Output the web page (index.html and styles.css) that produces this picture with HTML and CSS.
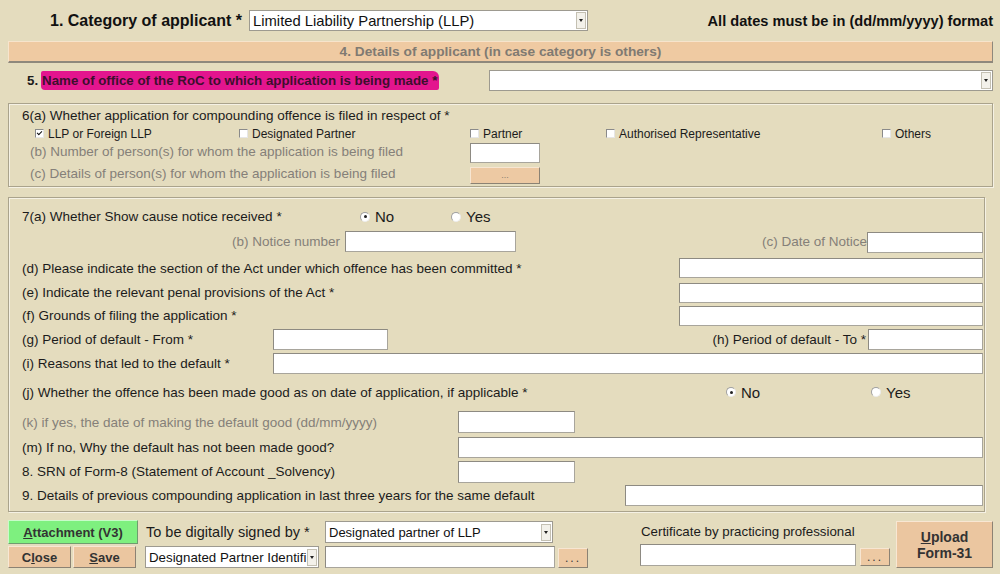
FILE: index.html
```html
<!DOCTYPE html>
<html lang="en">
<head>
  <meta charset="UTF-8" />
  <title>Form LLP-31 | Compounding Application</title>
  <link rel="stylesheet" href="styles.css">
</head>
<body>

<div class="head">
  <span class="head-label">1. Category of applicant *</span>
  <div class="select sel-category"><span class="txt">Limited Liability Partnership (LLP)</span><span class="arrow"></span></div>
  <span class="date-note">All dates must be in (dd/mm/yyyy) format</span>
</div>

<div class="band">4. Details of applicant (in case category is others)</div>

<div class="roc-row">
  <span class="roc-num">5.</span>
  <span class="roc-label">Name of office of the RoC to which application is being made *</span>
  <div class="select sel-roc"><span class="txt"></span><span class="arrow"></span></div>
</div>

<section class="panel panel-6">
  <div class="p-title">6(a) Whether application for compounding offence is filed in respect of *</div>
  <div class="checks">
    <label class="chk c1"><span class="cb on"></span>LLP or Foreign LLP</label>
    <label class="chk c2"><span class="cb"></span>Designated Partner</label>
    <label class="chk c3"><span class="cb"></span>Partner</label>
    <label class="chk c4"><span class="cb"></span>Authorised Representative</label>
    <label class="chk"><span class="cb"></span>Others</label>
  </div>
  <div class="p-row h21">
    <span class="muted lbl-6">(b) Number of person(s) for whom the application is being filed</span>
    <input class="box w70" type="text">
  </div>
  <div class="p-row h20">
    <span class="muted lbl-6">(c) Details of person(s) for whom the application is being filed</span>
    <button class="dots-btn">...</button>
  </div>
</section>

<section class="panel panel-7">
  <div class="row h21">
    <span class="lbl w338">7(a) Whether Show cause notice received *</span>
    <label class="opt w91"><span class="radio on"></span>No</label>
    <label class="opt"><span class="radio"></span>Yes</label>
  </div>
  <div class="row h28">
    <span class="muted lbl-b">(b) Notice number</span>
    <input class="box w171" type="text">
    <span class="muted push">(c) Date of Notice</span>
    <input class="box w116 low" type="text">
  </div>
  <div class="row h26">
    <span class="lbl">(d) Please indicate the section of the Act under which offence has been committed *</span>
    <input class="box w304 push" type="text">
  </div>
  <div class="row h23">
    <span class="lbl">(e) Indicate the relevant penal provisions of the Act *</span>
    <input class="box w304 push" type="text">
  </div>
  <div class="row h23">
    <span class="lbl">(f) Grounds of filing the application *</span>
    <input class="box w304 push" type="text">
  </div>
  <div class="row h25">
    <span class="lbl w251">(g) Period of default - From *</span>
    <input class="box w115" type="text">
    <span class="push">(h) Period of default - To *</span>
    <input class="box w115 gap2" type="text">
  </div>
  <div class="row h23">
    <span class="lbl w251">(i) Reasons that led to the default *</span>
    <input class="box grow" type="text">
  </div>
  <div class="row h34">
    <span class="lbl w704">(j) Whether the offence has been made good as on date of application, if applicable *</span>
    <label class="opt w145"><span class="radio on"></span>No</label>
    <label class="opt"><span class="radio"></span>Yes</label>
  </div>
  <div class="row h26">
    <span class="lbl muted w436">(k) if yes, the date of making the default good (dd/mm/yyyy)</span>
    <input class="box w117" type="text">
  </div>
  <div class="row h25">
    <span class="lbl w436">(m) If no, Why the default has not been made good?</span>
    <input class="box grow" type="text">
  </div>
  <div class="row h23">
    <span class="lbl w436">8. SRN of Form-8 (Statement of Account _Solvency)</span>
    <input class="box w117" type="text">
  </div>
  <div class="row h25">
    <span class="lbl w603">9. Details of previous compounding application in last three years for the same default</span>
    <input class="box grow" type="text">
  </div>
</section>

<div class="footer">
  <div class="col-btns">
    <button class="btn btn-green"><u>A</u>ttachment (V3)</button>
    <div class="btn-pair">
      <button class="btn">C<u>l</u>ose</button>
      <button class="btn"><u>S</u>ave</button>
    </div>
  </div>

  <div class="col-sign">
    <div class="sign-top">
      <span class="sign-label">To be digitally signed by *</span>
      <div class="select sel-signer"><span class="txt">Designated partner of LLP</span><span class="arrow"></span></div>
    </div>
    <div class="sign-bottom">
      <div class="select sel-id"><span class="txt">Designated Partner Identifi</span><span class="arrow"></span></div>
      <input class="box w230" type="text">
      <button class="dots-btn small">...</button>
    </div>
  </div>

  <div class="col-cert">
    <span class="cert-label">Certificate by practicing professional</span>
    <div class="cert-bottom">
      <input class="box w216" type="text">
      <button class="dots-btn small cert">...</button>
    </div>
  </div>

  <button class="btn btn-upload"><u>U</u>pload<br>Form-31</button>
</div>

</body>
</html>
```

FILE: styles.css
```css
* {
  margin: 0;
  padding: 0;
  box-sizing: border-box;
}

body {
  width: 1000px;
  height: 574px;
  overflow: hidden;
  background: #e4dcbe;
  font-family: "Liberation Sans", Arial, sans-serif;
  font-size: 13.5px;
  color: #1b1b1b;
}

/* shared form controls */
.box {
  display: block;
  height: 21px;
  background: #fff;
  border: 1px solid #a8a59c;
  border-top-color: #8d8a82;
  border-left-color: #8d8a82;
  font: inherit;
  outline: none;
}

.select {
  display: flex;
  align-items: center;
  height: 21px;
  background: #fff;
  border: 1px solid #9d9a90;
  padding-left: 3px;
  font-size: 13px;
  color: #111;
}

.select .txt {
  flex: 1;
  white-space: nowrap;
  overflow: hidden;
}

.arrow {
  display: flex;
  align-items: center;
  justify-content: center;
  width: 10px;
  height: 17px;
  margin-right: 1px;
  background: #f3f1ea;
  border: 1px solid #c4c0b2;
}

.arrow::after {
  content: "";
  border-left: 2px solid transparent;
  border-right: 2px solid transparent;
  border-top: 3px solid #222;
}

.muted {
  color: #858079;
}

.push {
  margin-left: auto;
}

.grow {
  flex: 1;
}

/* header */
.head {
  display: flex;
  align-items: center;
  height: 41px;
  padding: 0 7px 0 50px;
}

.head-label {
  width: 199px;
  font-size: 16px;
  font-weight: bold;
  white-space: nowrap;
  color: #111;
}

.sel-category {
  width: 339px;
  font-size: 14.8px;
}

.date-note {
  margin-left: auto;
  font-weight: bold;
  font-size: 14.6px;
  color: #111;
}

.band {
  height: 22px;
  margin: 0 7px 0 8px;
  background: #efcaa2;
  border: 1px solid;
  border-color: #f7e4cc #8e887c #8e887c #f7e4cc;
  border-bottom-width: 2px;
  text-align: center;
  font-weight: bold;
  font-size: 13.7px;
  color: #807a72;
  line-height: 19px;
}

.roc-row {
  display: flex;
  align-items: center;
  height: 34px;
  padding: 0 7px 0 27px;
  font-weight: bold;
  font-size: 13.3px;
}

.roc-label {
  margin-left: 3px;
  padding: 2px 2px 2px 1px;
  background: #e3158e;
  color: #3d0f2d;
  border-radius: 2px 6px 2px 4px;
}

.sel-roc {
  margin-left: auto;
  width: 504px;
}

/* grouped panels */
.panel {
  border: 1px solid #aaa38c;
  box-shadow: inset 1px 1px 0 #f5f1e4, 1px 1px 0 #f5f1e4;
}

.panel-6 {
  height: 84px;
  margin: 6px 7px 0 8px;
  padding: 3px 0 0 13px;
}

.p-title {
  height: 18px;
  line-height: 18px;
}

.checks {
  display: flex;
  align-items: center;
  height: 17px;
  margin-left: 13px;
  font-size: 12px;
}

.chk {
  display: flex;
  align-items: center;
  gap: 4px;
}

.c1 { width: 204px; }
.c2 { width: 231px; }
.c3 { width: 136px; }
.c4 { width: 276px; }

.cb {
  display: flex;
  align-items: center;
  justify-content: center;
  width: 9px;
  height: 9px;
  background: #fff;
  border: 1px solid;
  border-color: #8a8a8a #e6e6e6 #e6e6e6 #8a8a8a;
}

.cb.on::after {
  content: "";
  width: 4px;
  height: 2px;
  margin-top: -2px;
  border-left: 1.5px solid #111;
  border-bottom: 1.5px solid #111;
  transform: rotate(-45deg);
}

.p-row {
  display: flex;
  align-items: center;
}

.p-row .lbl-6 {
  margin-top: -3px;
}

.h20 { height: 20px; margin-top: 2px; }
.h21 { height: 21px; }
.h23 { height: 23px; }
.h25 { height: 25px; }
.h26 { height: 26px; }
.h28 { height: 28px; }
.h34 { height: 34px; }

.lbl-6 {
  width: 448px;
  padding-left: 8px;
}

.dots-btn {
  width: 70px;
  height: 17px;
  background: #edc9a3;
  border: 1px solid;
  border-color: #f7e6d2 #8b8274 #8b8274 #f7e6d2;
  font-family: inherit;
  font-size: 9px;
  color: #8a7f70;
  line-height: 12px;
}

.panel-7 {
  height: 315px;
  margin: 10px 15px 0 8px;
  padding: 8px 1px 0 13px;
}

.row {
  display: flex;
  align-items: center;
}

.w70 { width: 70px; height: 20px; }
.w91 { width: 91px; }
.w115 { width: 115px; }
.w116 { width: 116px; }
.w117 { width: 117px; height: 22px; }
.w145 { width: 145px; }
.w171 { width: 171px; }
.w216 { width: 216px; height: 22px; }
.w230 { width: 230px; height: 22px; }
.w251 { width: 251px; }
.w304 { width: 304px; height: 20px; }
.w338 { width: 338px; }
.w436 { width: 436px; }
.w603 { width: 603px; }
.w704 { width: 704px; }

.lbl {
  white-space: nowrap;
}

.lbl-b {
  width: 323px;
  padding-right: 5px;
  text-align: right;
}

.low {
  margin-top: 3px;
}

.gap2 {
  margin-left: 2px;
}

.opt {
  display: flex;
  align-items: center;
  gap: 5px;
  font-size: 15px;
}

.radio {
  display: flex;
  align-items: center;
  justify-content: center;
  width: 10px;
  height: 10px;
  border-radius: 50%;
  background: #fff;
  border: 1px solid;
  border-color: #a0a0a0 #ececec #ececec #a0a0a0;
}

.radio.on::after {
  content: "";
  width: 3px;
  height: 3px;
  border-radius: 50%;
  background: #222;
}

/* bottom bar */
.footer {
  display: flex;
  margin-top: 8px;
  padding-left: 8px;
}

.btn {
  background: #ebc6a0;
  border: 1px solid;
  border-color: #f8e7d3 #8c8273 #8c8273 #f8e7d3;
  font-family: inherit;
  font-weight: bold;
  font-size: 13px;
  color: #333;
}

.col-btns {
  width: 130px;
}

.btn-green {
  width: 130px;
  height: 24px;
  background: #7ef07f;
  border-color: #c9fbc9 #6f9c6f #6f9c6f #c9fbc9;
}

.btn-pair {
  display: flex;
  gap: 2px;
  margin-top: 2px;
}

.btn-pair .btn {
  width: 63px;
  height: 22px;
}

.col-sign {
  margin-left: 7px;
}

.sign-top {
  display: flex;
  align-items: center;
  margin-top: 1px;
}

.sign-label {
  width: 180px;
  padding-left: 1px;
  font-size: 14.5px;
}

.sel-signer {
  width: 228px;
  height: 22px;
}

.sign-bottom {
  display: flex;
  align-items: flex-end;
  margin-top: 3px;
}

.sel-id {
  width: 174px;
  height: 22px;
  margin-right: 6px;
  font-size: 13.3px;
}

.dots-btn.small {
  width: 30px;
  height: 20px;
  margin-left: 3px;
  font-size: 12px;
  letter-spacing: 2px;
  color: #3a3a3a;
  line-height: 14px;
}

.col-cert {
  display: flex;
  flex-direction: column;
  margin-left: 52px;
}

.cert-label {
  height: 24px;
  line-height: 24px;
  padding-left: 1px;
  font-size: 13.3px;
}

.cert-bottom {
  display: flex;
  align-items: flex-end;
}

.dots-btn.cert {
  height: 18px;
  margin-left: 4px;
}

.btn-upload {
  width: 97px;
  height: 47px;
  margin: 1px 0 0 6px;
  font-size: 14px;
  line-height: 16px;
}
```
